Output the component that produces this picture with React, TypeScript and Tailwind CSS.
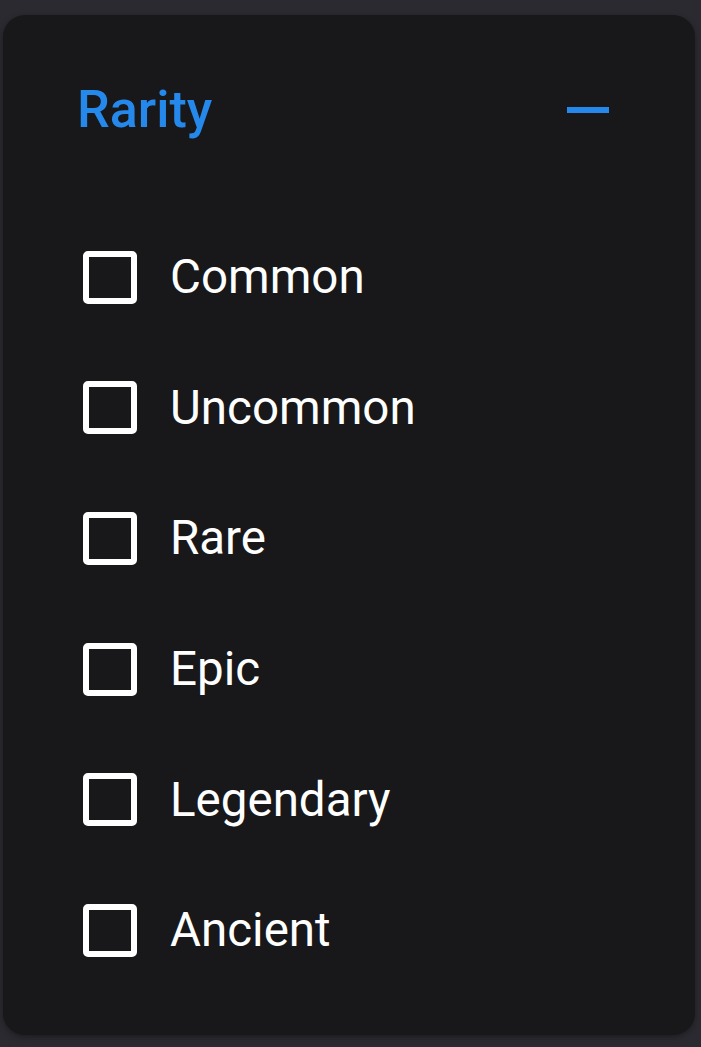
import { useState } from "react";

const rarities = ["Common", "Uncommon", "Rare", "Epic", "Legendary", "Ancient"];

export default function App() {
  const [open, setOpen] = useState(true);
  const [checked, setChecked] = useState<Record<string, boolean>>({});

  return (
    <div
      className="min-h-[1047px] w-full bg-[#2a2a30] pt-[15px] pl-[3px]"
      style={{ fontFamily: "Roboto, 'Liberation Sans', sans-serif" }}
    >
      <div className="w-[692px] h-[1020px] rounded-[22px] bg-[#18181b] pt-[69px] pl-[74px] pr-[86px] shadow-[0_2px_6px_rgba(0,0,0,0.35)]">
        {/* Header */}
        <div className="flex items-center justify-between h-[52px]">
          <h2 className="text-[52px] leading-[52px] font-medium text-[#2589ec]">Rarity</h2>
          <button
            onClick={() => setOpen(!open)}
            className="w-[42px] h-[52px] flex items-center justify-center"
          >
            <span className="block w-[42px] h-[6px] bg-[#2589ec]" />
          </button>
        </div>

        {/* Options */}
        {open && (
          <div className="mt-[76px] -ml-[74px] pl-[80px]">
            {rarities.map((r) => (
              <label key={r} className="flex items-center h-[130.6px] cursor-pointer">
                <input
                  type="checkbox"
                  className="hidden"
                  checked={!!checked[r]}
                  onChange={() => setChecked({ ...checked, [r]: !checked[r] })}
                />
                <span className="w-[54px] h-[53px] rounded-[5px] border-[6px] border-white bg-[#18181b] shrink-0" />
                <span className="ml-[33px] text-[47.5px] leading-[48px] text-white">{r}</span>
              </label>
            ))}
          </div>
        )}
      </div>
    </div>
  );
}
